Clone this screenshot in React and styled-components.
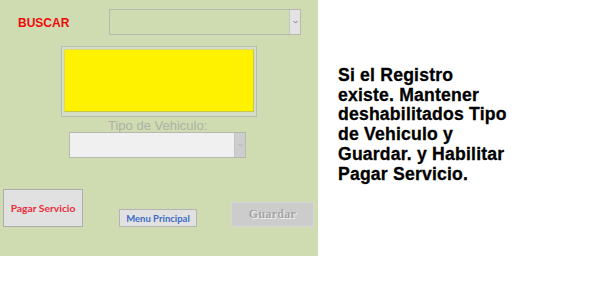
import React from "react";
import styled, { createGlobalStyle } from "styled-components";

const GlobalStyle = createGlobalStyle`
  html, body {
    margin: 0;
    padding: 0;
    background: #ffffff;
  }
  body {
    font-family: "Liberation Sans", Arial, sans-serif;
  }
`;

const Page = styled.div`
  display: flex;
  align-items: flex-start;
  width: 600px;
  height: 298px;
`;

const Panel = styled.div`
  width: 318px;
  height: 256px;
  background: #cfdcb1;
  display: flex;
  flex-direction: column;
`;

const SearchRow = styled.div`
  display: flex;
  align-items: flex-start;
  padding-top: 9px;
`;

const SearchLabel = styled.div`
  width: 91px;
  padding: 8px 0 0 18px;
  font-size: 12px;
  line-height: 12px;
  font-weight: bold;
  color: #f00a0a;
`;

const Combo = styled.div`
  box-sizing: border-box;
  display: flex;
  width: ${(p) => p.$width}px;
  height: 26px;
  margin-left: ${(p) => p.$left || 0}px;
  border: 1px solid #b6b9ad;
  background: ${(p) => p.$bg};
`;

const ComboField = styled.div`
  flex: 1;
`;

const ComboButton = styled.div`
  width: 10px;
  display: flex;
  align-items: center;
  justify-content: center;
  background: ${(p) => p.$bg};
  border-left: 1px solid #c4c4c4;
  svg {
    width: 5px;
    height: 4px;
  }
`;

const Frame = styled.div`
  box-sizing: border-box;
  width: 196px;
  height: 71px;
  margin: 11px 0 0 61px;
  padding: 2px 2px 4px 2px;
  border: 1px solid #b9bdb1;
  background: #d6ddc6;
  display: flex;
`;

const Plate = styled.div`
  flex: 1;
  background: #fff200;
  border: 1px solid #c8c64a;
  border-top-color: #dcd86a;
  border-left-color: #dcd86a;
`;

const FieldLabel = styled.div`
  margin: 3px 0 0 108px;
  font-size: 13px;
  line-height: 12px;
  color: #aeb0a6;
`;

const ButtonRow = styled.div`
  display: flex;
  align-items: flex-end;
  margin-top: 31px;
`;

const Button = styled.div`
  box-sizing: border-box;
  display: flex;
  align-items: center;
  justify-content: center;
  width: ${(p) => p.$width}px;
  height: ${(p) => p.$height}px;
  margin-left: ${(p) => p.$left}px;
  background: ${(p) => p.$bg || "#e1e1e1"};
  border: 1px solid ${(p) => p.$border || "#adadad"};
  color: ${(p) => p.$color};
  font-family: Lato, "Open Sans", sans-serif;
  font-weight: bold;
  font-size: ${(p) => p.$size || 10}px;
`;

const GhostText = styled.span`
  font-family: "Liberation Serif", "Times New Roman", serif;
  font-size: 12px;
  font-weight: bold;
  color: #a5a5a5;
  text-shadow: 1px 1px 0 #f2f2f2;
  letter-spacing: 0.3px;
`;

const Note = styled.p`
  margin: 66px 0 0 20px;
  font-size: 17.6px;
  line-height: 19.7px;
  font-weight: bold;
  letter-spacing: 0.2px;
  color: #000000;
  -webkit-text-stroke: 0.3px #000000;
`;

const Chevron = ({ color }) => (
  <svg viewBox="0 0 5 4">
    <path d="M0.5 1 L2.5 3 L4.5 1" fill="none" stroke={color} strokeWidth="0.8" />
  </svg>
);

export default function App() {
  return (
    <>
      <GlobalStyle />
      <Page>
        <Panel>
          <SearchRow>
            <SearchLabel>BUSCAR</SearchLabel>
            <Combo $width={192} $bg="#cfdcb1">
              <ComboField />
              <ComboButton $bg="#e3e3e3">
                <Chevron color="#6b6b6b" />
              </ComboButton>
            </Combo>
          </SearchRow>
          <Frame>
            <Plate />
          </Frame>
          <FieldLabel>Tipo de Vehiculo:</FieldLabel>
          <Combo $width={177} $left={69} $bg="#f0f0f0">
            <ComboField />
            <ComboButton $bg="#cdcdcd">
              <Chevron color="#a8a8a8" />
            </ComboButton>
          </Combo>
          <ButtonRow>
            <Button $width={80} $height={38} $left={3} $color="#ec2b38" $size={10.3}>
              Pagar Servicio
            </Button>
            <Button
              $width={78}
              $height={18}
              $left={36}
              $color="#3b6cc6"
              $border="#b4b4b4"
              $size={9.5}
            >
              Menu Principal
            </Button>
            <Button
              $width={83}
              $height={25}
              $left={34}
              $bg="#cccccc"
              $border="#d6d6d6"
            >
              <GhostText>Guardar</GhostText>
            </Button>
          </ButtonRow>
        </Panel>
        <Note>
          Si el Registro
          <br />
          existe. Mantener
          <br />
          deshabilitados Tipo
          <br />
          de Vehiculo y
          <br />
          Guardar. y Habilitar
          <br />
          Pagar Servicio.
        </Note>
      </Page>
    </>
  );
}
